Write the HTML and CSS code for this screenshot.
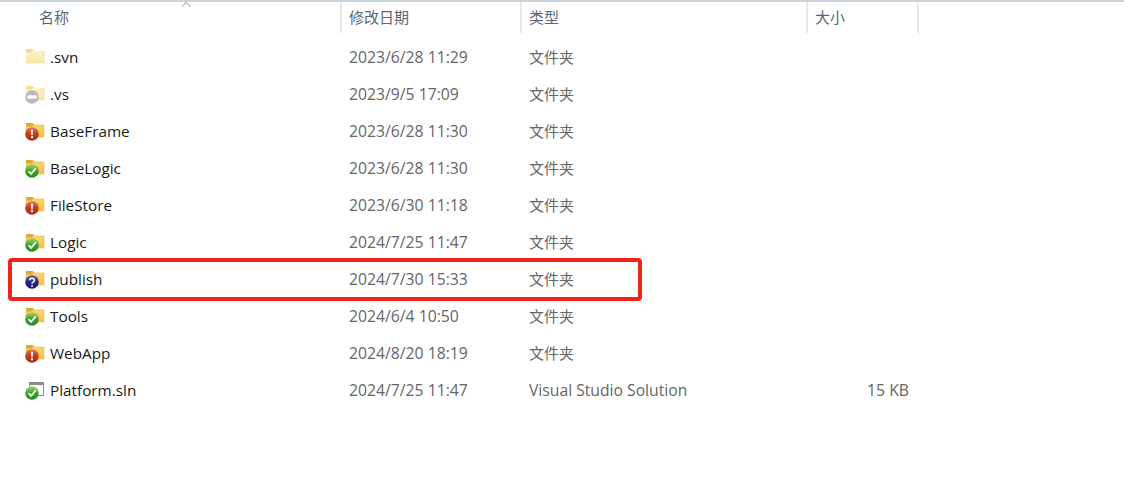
FILE: index.html
```html
<!DOCTYPE html>
<html lang="zh-CN">
<head>
  <meta charset="UTF-8">
  <title>Platform</title>
  <link rel="stylesheet" href="styles.css">
</head>
<body>

  <!-- shared icon parts -->
  <svg class="defs" width="0" height="0" aria-hidden="true">
    <defs>
      <linearGradient id="bright" x1="0" y1="0" x2="0" y2="1">
        <stop offset="0" stop-color="#fbd873"/>
        <stop offset="1" stop-color="#f4c04c"/>
      </linearGradient>
      <linearGradient id="pale" x1="0" y1="0" x2="0" y2="1">
        <stop offset="0" stop-color="#fdf1c8"/>
        <stop offset="1" stop-color="#fbe8b0"/>
      </linearGradient>
      <linearGradient id="green" x1="0" y1="0" x2="0" y2="1">
        <stop offset="0" stop-color="#a4d867"/>
        <stop offset=".5" stop-color="#3fa02c"/>
        <stop offset="1" stop-color="#1f8a1f"/>
      </linearGradient>
      <linearGradient id="red" x1="0" y1="0" x2="0" y2="1">
        <stop offset="0" stop-color="#e07a55"/>
        <stop offset=".5" stop-color="#c4391c"/>
        <stop offset="1" stop-color="#a92a12"/>
      </linearGradient>
      <linearGradient id="navy" x1="0" y1="0" x2="0" y2="1">
        <stop offset="0" stop-color="#6666b8"/>
        <stop offset=".5" stop-color="#26267f"/>
        <stop offset="1" stop-color="#1a1a6a"/>
      </linearGradient>
      <symbol id="folder" viewBox="0 0 20 20">
        <path d="M1 2h6.500l2 2H19v12H1z" fill="url(#bright)"/>
        <path d="M1 2h6.500l2 2h-2l-1 1.500H1z" fill="#e2a92e"/>
        <path d="M1 5.500h5.500l1-1.500H19v12H1z" fill="none" stroke="#e5b84c" stroke-width=".6"/>
      </symbol>
      <symbol id="folder-pale" viewBox="0 0 20 20">
        <path d="M1 2h6.500l2 2H19v12H1z" fill="url(#pale)"/>
        <path d="M1 2h6.500l2 2h-2l-1 1.500H1z" fill="#f8dc90"/>
        <path d="M1 16h18V4" fill="none" stroke="#f2d88e" stroke-width=".7"/>
      </symbol>
      <symbol id="ok" viewBox="0 0 12 12">
        <circle cx="6" cy="6" r="5.800" fill="url(#green)"/>
        <path d="M3 6.200l2.200 2.300L9.300 3.600" fill="none" stroke="#fff" stroke-width="1.500"/>
      </symbol>
      <symbol id="warn" viewBox="0 0 12 12">
        <circle cx="6" cy="6" r="5.800" fill="url(#red)"/>
        <path d="M5.100 2.400h1.800l-.3 4.600H5.400z" fill="#fff"/>
        <circle cx="6" cy="8.800" r="1" fill="#fff"/>
      </symbol>
      <symbol id="ask" viewBox="0 0 12 12">
        <circle cx="6" cy="6" r="5.800" fill="url(#navy)"/>
        <path d="M4 4.500a2 1.800 0 1 1 3 1.600c-.7.400-1 .7-1 1.500" fill="none" stroke="#fff" stroke-width="1.300"/>
        <circle cx="6" cy="9.400" r=".8" fill="#fff"/>
      </symbol>
      <symbol id="off" viewBox="0 0 12 12">
        <circle cx="6" cy="6" r="5.800" fill="#b9b9b9"/>
        <rect x="2" y="4.600" width="8" height="2.800" fill="#fff"/>
      </symbol>
    </defs>
  </svg>

  <div class="header">
    <div class="head-cell name-col">名称<svg class="sort-arrow" viewBox="0 0 10 5"><path d="M.5 4.800L5 .5l4.500 4.300" fill="none" stroke="#8a8f96"/></svg></div>
    <div class="head-cell date-col">修改日期</div>
    <div class="head-cell type-col">类型</div>
    <div class="head-cell size-col">大小</div>
    <div class="head-cell rest-col"></div>
  </div>

  <div class="rows">
    <div class="row">
      <div class="name-col file"><span class="icon"><svg class="base"><use href="#folder-pale"/></svg></span>.svn</div>
      <div class="date-col">2023/6/28 11:29</div><div class="type-col">文件夹</div><div class="size-col"></div>
    </div>
    <div class="row">
      <div class="name-col file"><span class="icon"><svg class="base"><use href="#folder-pale"/></svg><svg class="badge"><use href="#off"/></svg></span>.vs</div>
      <div class="date-col">2023/9/5 17:09</div><div class="type-col">文件夹</div><div class="size-col"></div>
    </div>
    <div class="row">
      <div class="name-col file"><span class="icon"><svg class="base"><use href="#folder"/></svg><svg class="badge"><use href="#warn"/></svg></span>BaseFrame</div>
      <div class="date-col">2023/6/28 11:30</div><div class="type-col">文件夹</div><div class="size-col"></div>
    </div>
    <div class="row">
      <div class="name-col file"><span class="icon"><svg class="base"><use href="#folder"/></svg><svg class="badge"><use href="#ok"/></svg></span>BaseLogic</div>
      <div class="date-col">2023/6/28 11:30</div><div class="type-col">文件夹</div><div class="size-col"></div>
    </div>
    <div class="row">
      <div class="name-col file"><span class="icon"><svg class="base"><use href="#folder"/></svg><svg class="badge"><use href="#warn"/></svg></span>FileStore</div>
      <div class="date-col">2023/6/30 11:18</div><div class="type-col">文件夹</div><div class="size-col"></div>
    </div>
    <div class="row">
      <div class="name-col file"><span class="icon"><svg class="base"><use href="#folder"/></svg><svg class="badge"><use href="#ok"/></svg></span>Logic</div>
      <div class="date-col">2024/7/25 11:47</div><div class="type-col">文件夹</div><div class="size-col"></div>
    </div>
    <div class="row">
      <div class="name-col file"><span class="icon"><svg class="base"><use href="#folder"/></svg><svg class="badge"><use href="#ask"/></svg></span>publish</div>
      <div class="date-col">2024/7/30 15:33</div><div class="type-col">文件夹</div><div class="size-col"></div>
    </div>
    <div class="row">
      <div class="name-col file"><span class="icon"><svg class="base"><use href="#folder"/></svg><svg class="badge"><use href="#ok"/></svg></span>Tools</div>
      <div class="date-col">2024/6/4 10:50</div><div class="type-col">文件夹</div><div class="size-col"></div>
    </div>
    <div class="row">
      <div class="name-col file"><span class="icon"><svg class="base"><use href="#folder"/></svg><svg class="badge"><use href="#warn"/></svg></span>WebApp</div>
      <div class="date-col">2024/8/20 18:19</div><div class="type-col">文件夹</div><div class="size-col"></div>
    </div>
    <div class="row">
      <div class="name-col file"><span class="icon"><span class="sln-box"></span><svg class="badge"><use href="#ok"/></svg></span>Platform.sln</div>
      <div class="date-col">2024/7/25 11:47</div><div class="type-col type-latin">Visual Studio Solution</div><div class="size-col size-value">15 KB</div>
    </div>
  </div>

  <!-- red annotation drawn over the publish row -->
  <div class="highlight"></div>

</body>
</html>
```

FILE: styles.css
```css
body {
  margin: 0;
  height: 504px;
  overflow: hidden;
  position: relative;
  background: #fff;
  font-family: "Open Sans", "Noto Sans CJK SC", sans-serif;
  font-size: 15.750px;
  color: #666;
}
.defs {
  position: absolute;
}
.header {
  display: flex;
  height: 33px;
  border-top: 2px solid #c8d3dc;
  box-sizing: border-box;
}
.head-cell {
  box-sizing: border-box;
  border-right: 2px solid #e8e8e8;
  padding-top: 3px;
  line-height: 24px;
  font-size: 15px;
  font-family: "Noto Sans CJK SC", sans-serif;
  color: #5a6675;
  position: relative;
}
.name-col {
  width: 342px;
  flex: none;
  box-sizing: border-box;
  padding-left: 39px;
}
.date-col {
  width: 180px;
  flex: none;
  box-sizing: border-box;
  padding-left: 7px;
}
.type-col {
  width: 286px;
  flex: none;
  box-sizing: border-box;
  padding-left: 7px;
}
.size-col {
  width: 111px;
  flex: none;
  box-sizing: border-box;
  padding-left: 7px;
}
.rest-col {
  border-right: none;
}
.sort-arrow {
  position: absolute;
  left: 181px;
  top: 0;
  width: 10px;
  height: 5px;
}
.rows {
  padding-top: 5px;
}
.row {
  display: flex;
  height: 37px;
  align-items: center;
}
.row .type-col {
  font-size: 15px;
}
.row .type-latin {
  font-size: 15.700px;
}
.file {
  display: flex;
  align-items: center;
  padding-left: 25px;
  color: #1a1a1a;
  font-size: 15.300px;
}
.icon {
  position: relative;
  width: 20px;
  height: 20px;
  margin-right: 5px;
  flex: none;
}
.base {
  width: 20px;
  height: 20px;
  display: block;
}
.badge {
  position: absolute;
  left: 0;
  bottom: 0;
  width: 14px;
  height: 14px;
}
.sln-box {
  position: absolute;
  left: 4px;
  top: 2px;
  width: 15px;
  height: 14px;
  box-sizing: border-box;
  border: 1px solid #8b8b8b;
  border-top-width: 3px;
  background: #fff;
}
.size-value {
  text-align: right;
  padding-right: 10px;
}
.highlight {
  position: absolute;
  left: 8px;
  top: 258px;
  width: 634px;
  height: 43px;
  box-sizing: border-box;
  border: 4px solid #ee2419;
  border-radius: 4px;
}
```
